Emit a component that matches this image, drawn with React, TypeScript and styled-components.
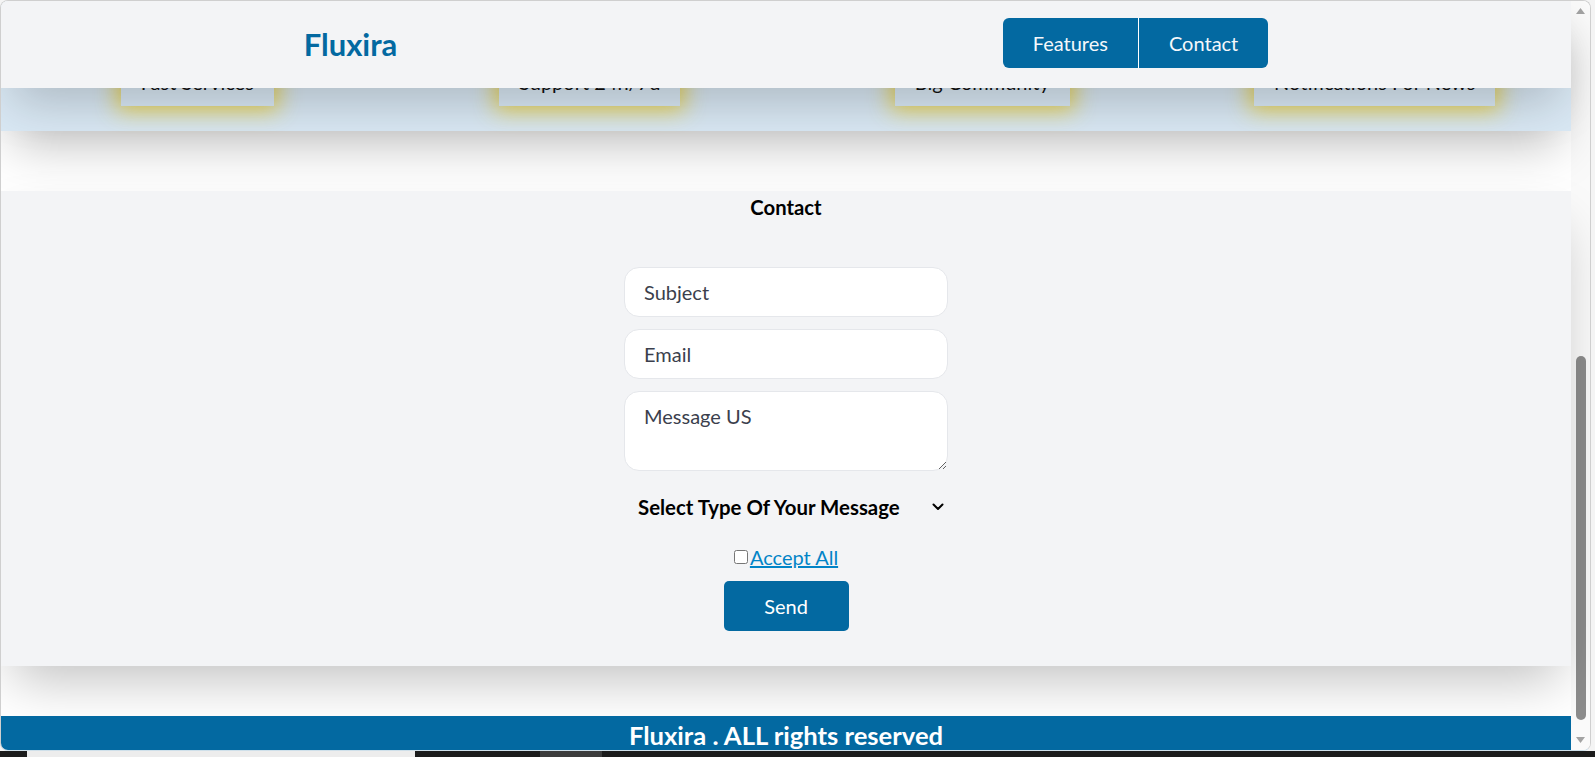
import React from "react";
import styled, { createGlobalStyle } from "styled-components";

const BLUE = "#0369a1";
const FONT = `Lato, "Noto Sans", "Liberation Sans", sans-serif`;

const GlobalStyle = createGlobalStyle`
  html, body { margin: 0; padding: 0; overflow: hidden; }
  body { font-family: ${FONT}; background: #f4f4f4; }
  * { box-sizing: border-box; }
`;

const Screen = styled.div`
  width: 1595px;
  height: 757px;
  display: flex;
  flex-direction: column;
  background: #f4f4f4;
`;

const Window = styled.div`
  height: 751px;
  display: flex;
  margin-right: 4px;
  background: #ffffff;
  border: 1px solid #cfcfcf;
  border-bottom-color: #cfe0ea;
  border-radius: 8px;
  overflow: hidden;
`;

const Page = styled.div`
  position: relative;
  flex: 1;
  min-width: 0;
  display: flex;
  flex-direction: column;
  background: #ffffff;
`;

const Header = styled.header`
  position: absolute;
  top: 0;
  left: 0;
  right: 0;
  height: 87px;
  z-index: 10;
  display: flex;
  justify-content: space-around;
  align-items: center;
  background: #f3f4f6;
  box-shadow: 0 25px 50px -12px rgba(0, 0, 0, 0.22);
`;

const Logo = styled.h1`
  margin: 0;
  font-size: 31px;
  font-weight: 700;
  color: ${BLUE};
  line-height: 1.2;
`;

const Nav = styled.nav`
  display: flex;
  border-radius: 6px;
  overflow: hidden;
  margin-bottom: 3px;
`;

const NavButton = styled.button<{ $divider?: boolean }>`
  height: 50px;
  padding: 0 30px;
  border: none;
  border-right: ${(p) => (p.$divider ? "1px solid #ffffff" : "none")};
  background: ${BLUE};
  color: #f5f8fb;
  font-family: ${FONT};
  font-size: 20px;
  cursor: pointer;
`;

const FeatureBand = styled.section`
  height: 130px;
  flex-shrink: 0;
  display: grid;
  grid-template-columns: repeat(4, 1fr);
  align-items: end;
  justify-items: center;
  padding-bottom: 25px;
  background: #d9e8f4;
  box-shadow: 0 25px 50px -12px rgba(0, 0, 0, 0.25);
`;

const FeatureCard = styled.div`
  padding: 12px 20px;
  font-size: 20px;
  line-height: 24px;
  color: #111111;
  white-space: nowrap;
  box-shadow: 0 0 22px 4px rgba(238, 204, 30, 0.8);
`;

const ContactSection = styled.section`
  margin-top: 60px;
  height: 475px;
  flex-shrink: 0;
  display: flex;
  flex-direction: column;
  align-items: center;
  padding-top: 4px;
  background: #f3f4f6;
  box-shadow: 0 25px 50px -12px rgba(0, 0, 0, 0.25);
`;

const Title = styled.h3`
  margin: 0;
  font-size: 20.3px;
  font-weight: 700;
  line-height: 24px;
  color: #000000;
`;

const Form = styled.form`
  margin-top: 48px;
  display: flex;
  flex-direction: column;
  align-items: center;
`;

const fieldBase = `
  width: 324px;
  border: 1px solid #e5e7eb;
  border-radius: 15px;
  background: #ffffff;
  font-family: ${FONT};
  font-size: 20px;
  color: #374151;
  outline: none;
  &::placeholder { color: #3b3f4d; opacity: 1; }
`;

const TextInput = styled.input`
  ${fieldBase}
  height: 50px;
  padding: 0 19px;
  margin-bottom: 12px;
`;

const TextArea = styled.textarea`
  ${fieldBase}
  height: 80px;
  padding: 12px 19px;
  line-height: 24px;
  resize: both;
`;

const SelectRow = styled.label`
  width: 324px;
  height: 24px;
  margin-top: 24px;
  display: flex;
  align-items: center;
`;

const Select = styled.select`
  flex: 1;
  appearance: none;
  border: none;
  background: transparent;
  padding: 0 0 0 14px;
  height: 24px;
  font-family: ${FONT};
  font-size: 20.4px;
  font-weight: 700;
  color: #000000;
  outline: none;
`;

const Chevron = styled.svg`
  width: 12px;
  height: 8px;
  margin-right: 4px;
  flex-shrink: 0;
`;

const AcceptRow = styled.div`
  margin-top: 26px;
  height: 24px;
  display: flex;
  align-items: center;
`;

const Checkbox = styled.input`
  width: 14px;
  height: 14px;
  margin: 0 2px 0 0;
`;

const AcceptLink = styled.a`
  font-size: 20px;
  line-height: 24px;
  color: #0284c7;
  text-decoration: underline;
`;

const SendButton = styled.button`
  margin-top: 12px;
  width: 125px;
  height: 50px;
  border: none;
  border-radius: 5px;
  background: ${BLUE};
  color: #ffffff;
  font-family: ${FONT};
  font-size: 20px;
  cursor: pointer;
`;

const Footer = styled.footer`
  margin-top: 50px;
  height: 34px;
  flex-shrink: 0;
  padding-top: 3px;
  background: ${BLUE};
  color: #ffffff;
  font-size: 25.6px;
  font-weight: 700;
  line-height: 32px;
  text-align: center;
  white-space: nowrap;
  overflow: hidden;
`;

const Scrollbar = styled.div`
  width: 19px;
  flex-shrink: 0;
  display: flex;
  flex-direction: column;
  align-items: center;
  background: #fafafa;
`;

const ArrowBox = styled.div`
  height: 20px;
  display: flex;
  align-items: center;
  justify-content: center;
`;

const Track = styled.div`
  flex: 1;
  display: flex;
  flex-direction: column;
  align-items: center;
`;

const Thumb = styled.div`
  margin-top: 335px;
  width: 10px;
  height: 364px;
  border-radius: 5px;
  background: #8c8c8c;
`;

const Taskbar = styled.div`
  flex: 1;
  display: grid;
  grid-template-columns: 27px 388px 125px 62px 1fr;
  background: #1c1c1c;
`;

const TaskSeg = styled.div<{ $c: string }>`
  background: ${(p) => p.$c};
`;

const features = ["Fast Services", "Support 24h/7d", "Big Community", "Notifications For News"];

export default function App() {
  return (
    <Screen>
      <GlobalStyle />
      <Window>
        <Page>
          <Header>
            <Logo>Fluxira</Logo>
            <Nav>
              <NavButton $divider>Features</NavButton>
              <NavButton>Contact</NavButton>
            </Nav>
          </Header>

          <FeatureBand>
            {features.map((f) => (
              <FeatureCard key={f}>{f}</FeatureCard>
            ))}
          </FeatureBand>

          <ContactSection>
            <Title>Contact</Title>
            <Form onSubmit={(e) => e.preventDefault()}>
              <TextInput type="text" placeholder="Subject" />
              <TextInput type="email" placeholder="Email" />
              <TextArea placeholder="Message US" />
              <SelectRow>
                <Select defaultValue="">
                  <option value="">Select Type Of Your Message</option>
                  <option value="q">Question</option>
                  <option value="s">Suggestion</option>
                </Select>
                <Chevron viewBox="0 0 12 8" fill="none">
                  <path d="M1.5 1.5 L6 6 L10.5 1.5" stroke="#000" strokeWidth="2" strokeLinecap="round" strokeLinejoin="round" />
                </Chevron>
              </SelectRow>
              <AcceptRow>
                <Checkbox type="checkbox" id="accept" />
                <AcceptLink href="#">Accept All</AcceptLink>
              </AcceptRow>
              <SendButton type="submit">Send</SendButton>
            </Form>
          </ContactSection>

          <Footer>Fluxira . ALL rights reserved</Footer>
        </Page>

        <Scrollbar>
          <ArrowBox>
            <svg width="9" height="6" viewBox="0 0 9 6">
              <path d="M4.5 0 L9 6 L0 6 Z" fill="#a3a3a3" />
            </svg>
          </ArrowBox>
          <Track>
            <Thumb />
          </Track>
          <ArrowBox>
            <svg width="9" height="6" viewBox="0 0 9 6">
              <path d="M0 0 L9 0 L4.5 6 Z" fill="#a3a3a3" />
            </svg>
          </ArrowBox>
        </Scrollbar>
      </Window>
      <Taskbar>
        <TaskSeg $c="#1c1c1c" />
        <TaskSeg $c="#ededed" />
        <TaskSeg $c="#1c1c1c" />
        <TaskSeg $c="#3c3c3c" />
        <TaskSeg $c="#1c1c1c" />
      </Taskbar>
    </Screen>
  );
}
